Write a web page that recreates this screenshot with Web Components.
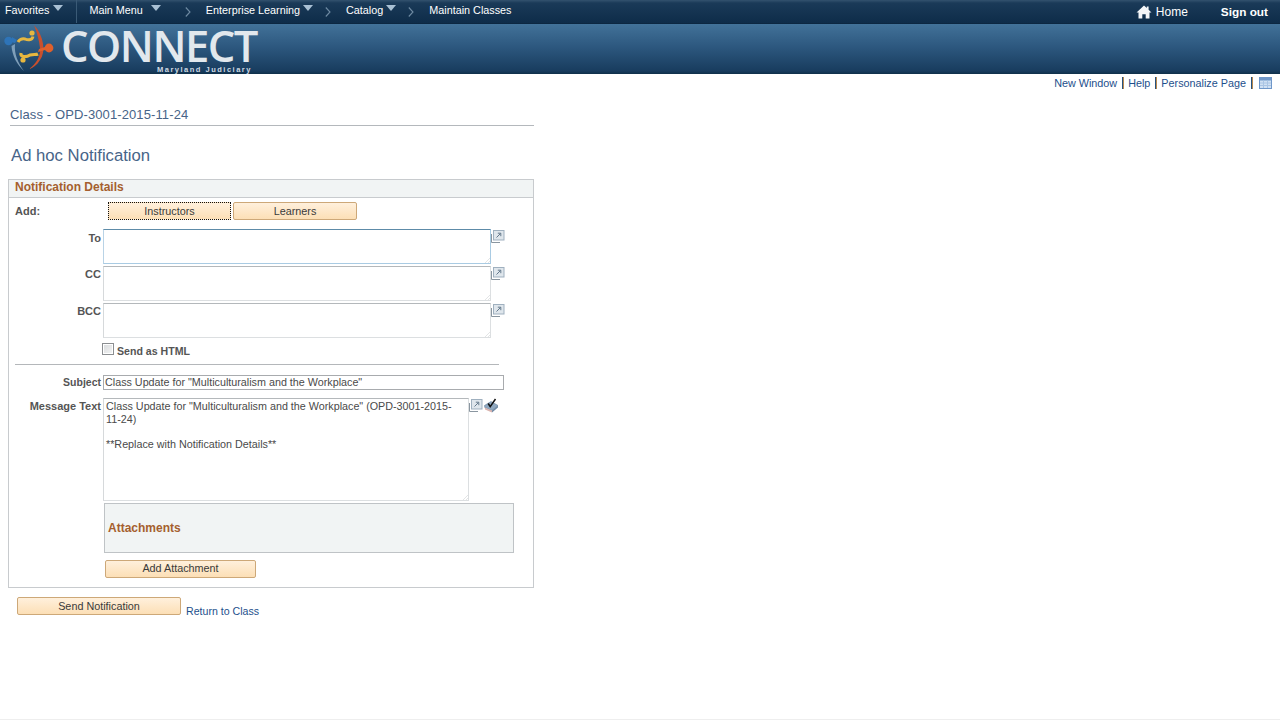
<!DOCTYPE html>
<html>
<head>
<meta charset="utf-8">
<title>Ad hoc Notification</title>
<style>
    html, body { margin: 0; padding: 0; background: #fff; }
    body { font-family: "Liberation Sans", Arial, sans-serif; font-size: 11px; color: #333; height: 720px; overflow: hidden; position: relative; }
</style>
</head>
<body>
<app-header>
    <app-navitem arrow>Favorites</app-navitem>
    <app-navsep></app-navsep>
    <app-navitem arrow gap="8">Main Menu</app-navitem>
    <app-chevron></app-chevron>
    <app-navitem arrow gap="3">Enterprise Learning</app-navitem>
    <app-chevron></app-chevron>
    <app-navitem arrow gap="3">Catalog</app-navitem>
    <app-chevron></app-chevron>
    <app-navitem>Maintain Classes</app-navitem>
</app-header>
<app-toolbar></app-toolbar>
<app-title></app-title>
<app-panel heading="Notification Details">
    <app-addrow>
        <app-btn width="123" focused>Instructors</app-btn>
        <app-btn width="124">Learners</app-btn>
    </app-addrow>
    <app-field label="To" gap="9"><app-box height="35" width="388" active></app-box><app-expand></app-expand></app-field>
    <app-field label="CC" gap="2"><app-box height="35" width="388"></app-box><app-expand></app-expand></app-field>
    <app-field label="BCC" gap="2"><app-box height="35" width="388"></app-box><app-expand></app-expand></app-field>
    <app-check>Send as HTML</app-check>
    <app-rule></app-rule>
    <app-field label="Subject" gap="10"><app-box height="15" width="401" single>Class Update for "Multiculturalism and the Workplace"</app-box></app-field>
    <app-field label="Message Text" gap="8"><app-box height="103" width="366">Class Update for "Multiculturalism and the Workplace" (OPD-3001-2015-11-24)

**Replace with Notification Details**</app-box><app-expand></app-expand><app-spell></app-spell></app-field>
    <app-attachments></app-attachments>
</app-panel>
<app-footer>
    <app-btn width="164">Send Notification</app-btn>
    <a slot="link">Return to Class</a>
</app-footer>
<app-bottomline></app-bottomline>

<script>
const FONT = '"Liberation Sans", Arial, sans-serif';

function shadow(el, html) {
    const template = document.createElement('template');
    template.innerHTML = html;
    el.attachShadow({ mode: 'open' }).appendChild(template.content.cloneNode(true));
}

class AppHeader extends HTMLElement {
    constructor() {
        super();
        shadow(this, `
            <style>
                :host { display: block; font-family: ${FONT}; }
                .nav {
                    height: 24px; box-sizing: border-box; display: flex; align-items: flex-start;
                    padding-left: 5px; color: #fff; font-size: 10.8px;
                    background: linear-gradient(#33526e 0, #1a3a58 3px, #0e2c49 100%);
                    border-bottom: 1px solid #0c2741;
                }
                .right { margin-left: auto; display: flex; align-items: center; height: 23px; font-size: 12px; padding-right: 12px; }
                .home { display: flex; align-items: center; gap: 4px; margin-right: 33px; }
                .home svg { margin-left: -1px; }
                .signout { font-weight: bold; font-size: 11.8px; }
                .banner {
                    height: 50px; box-sizing: border-box; position: relative;
                    display: flex; align-items: flex-start;
                    background: linear-gradient(#427299 0, #2d587f 45%, #183c5e 94%, #0f3049 100%);
                }
                .logo { flex: none; display: block; margin-top: -2px; }
                .brand { margin-left: 4px; position: relative; width: 210px; }
                .name { display: block; font-family: "Open Sans", sans-serif; font-size: 43.5px; font-weight: 600; line-height: 36px; margin-top: 4px; margin-left: 1px; color: #e2e8ed; letter-spacing: -1.5px; white-space: nowrap; }
                .sub { position: absolute; left: 97px; top: 41px; font-size: 7.5px; font-weight: bold; letter-spacing: 1.5px; color: #cfd9e2; white-space: nowrap; line-height: 9px; }
            </style>
            <div class="nav">
                <slot></slot>
                <div class="right">
                    <div class="home">
                        <svg width="16" height="14" viewBox="0 0 16 14"><path d="M8 0.5 0.5 7.5 2.5 7.5 2.5 13.5 6.3 13.5 6.3 9.2 9.7 9.2 9.7 13.5 13.5 13.5 13.5 7.5 15.5 7.5 12.6 4.8 12.6 1.5 10.8 1.5 10.8 3.1Z" fill="#f4f6f8"/></svg>
                        <span>Home</span>
                    </div>
                    <span class="signout">Sign out</span>
                </div>
            </div>
            <div class="banner">
                <svg class="logo" width="56" height="52" viewBox="0 0 56 52">
                    <path d="M34 3 C44 14 46 30 40 38 C37 43 33 46 29 47 C36 42 41 34 40 26 C39 18 37 10 34 3Z" fill="#c8502e"/>
                    <path d="M15 22 C14 32 18 41 24 49 C17 43 12 33 11.5 24Z" fill="#7f9fb9"/>
                    <circle cx="8.5" cy="19" r="4.2" fill="#2e74b8"/>
                    <path d="M12 15 L17 18 L15 21 L11 20Z" fill="#2e74b8"/>
                    <circle cx="49" cy="26" r="4.4" fill="#e0602c"/>
                    <path d="M39 27 L45 25 L45 28 L38 30Z" fill="#e0602c"/>
                    <circle cx="32" cy="11" r="2.6" fill="#e7b73f"/>
                    <path d="M33 14.5 C32 19 27 18 25 17 C22 16 19 18 18 20" stroke="#e7b73f" stroke-width="3" fill="none"/>
                    <circle cx="23" cy="38" r="2.6" fill="#e7b73f"/>
                    <path d="M21 31 C20 36 27 35 30 33 C33 32 36 33 38 32" stroke="#e7b73f" stroke-width="3.2" fill="none"/>
                </svg>
                <div class="brand"><span class="name">CONNECT</span><span class="sub">Maryland Judiciary</span></div>
            </div>
        `);
    }
}

class AppNavItem extends HTMLElement {
    constructor() {
        super();
        shadow(this, `
            <style>
                :host { display: flex; align-items: flex-start; height: 20px; line-height: 20px; white-space: nowrap; color: #fff; }
                svg { display: none; margin-top: 5px; }
                :host([arrow]) svg { display: block; }
            </style>
            <slot></slot>
            <svg width="10" height="6" viewBox="0 0 10 6"><path d="M0 0H10L5 6Z" fill="#a9c0d4"/></svg>
        `);
    }
    connectedCallback() {
        const gap = this.getAttribute('gap') || 4;
        this.shadowRoot.querySelector('svg').style.marginLeft = gap + 'px';
    }
}

class AppNavSep extends HTMLElement {
    constructor() {
        super();
        shadow(this, `<style>:host { display: block; width: 1px; height: 23px; background: #3a5a76; margin: 0 12px 0 13px; }</style>`);
    }
}

class AppChevron extends HTMLElement {
    constructor() {
        super();
        shadow(this, `
            <style>:host { display: block; margin: 7px 15px 0 12px; height: 10px; } svg { display: block; } :host(:nth-of-type(1)) { margin-left: 24px; }</style>
            <svg width="6" height="10" viewBox="0 0 6 10"><path d="M0.8 0.5 5 5 0.8 9.5" fill="none" stroke="#6f8ba3" stroke-width="1.1"/></svg>
        `);
    }
}

class AppToolbar extends HTMLElement {
    constructor() {
        super();
        shadow(this, `
            <style>
                :host { display: flex; justify-content: flex-end; align-items: center; height: 18px; padding: 0 8px 0 0; font: 10.8px ${FONT}; color: #1d4f8c; }
                span { white-space: nowrap; }
                i { display: block; width: 2px; height: 12px; margin: 0 4px 0 5px; background: linear-gradient(90deg, #27527e 50%, #b8894f 50%); }
                svg { display: block; margin: 0 0 1px 2px; }
            </style>
            <span>New Window</span><i></i><span>Help</span><i></i><span>Personalize Page</span><i></i>
            <svg width="13" height="12" viewBox="0 0 13 12">
                <rect x="0.5" y="0.5" width="12" height="11" fill="#cfe0f3" stroke="#6f97c9"/>
                <rect x="1" y="1" width="11" height="2.5" fill="#6f97c9"/>
                <path d="M1 6H12M1 8.5H12M4.5 3.5V11M8.5 3.5V11" stroke="#a9c4e4" stroke-width="1"/>
            </svg>
        `);
    }
}

class AppTitle extends HTMLElement {
    constructor() {
        super();
        shadow(this, `
            <style>
                :host { display: block; font-family: ${FONT}; color: #476488; padding: 14px 0 0 10px; width: 524px; }
                .crumb { font-size: 13px; line-height: 14px; padding: 2px 0 3px; border-bottom: 1px solid #b4b8bc; letter-spacing: 0.11px; white-space: nowrap; }
                h1 { font-size: 16.7px; font-weight: normal; line-height: 20px; margin: 20px 0 13px 1px; }
            </style>
            <div class="crumb">Class - OPD-3001-2015-11-24</div>
            <h1>Ad hoc Notification</h1>
        `);
    }
}

class AppPanel extends HTMLElement {
    constructor() {
        super();
        shadow(this, `
            <style>
                :host { display: block; box-sizing: border-box; width: 526px; height: 409px; margin-left: 8px; border: 1px solid #c8cbce; font-family: ${FONT}; }
                .head { height: 18px; box-sizing: border-box; background: #f1f4f4; border-bottom: 1px solid #c8cbce; padding-left: 6px; font-size: 12px; font-weight: bold; line-height: 14px; color: #a55f2e; }
            </style>
            <div class="head"></div>
            <slot></slot>
        `);
    }
    connectedCallback() {
        this.shadowRoot.querySelector('.head').textContent = this.getAttribute('heading');
    }
}

class AppAddRow extends HTMLElement {
    constructor() {
        super();
        shadow(this, `
            <style>
                :host { display: flex; align-items: flex-start; height: 18px; margin-top: 4px; }
                .lbl { width: 93px; padding-left: 6px; font-size: 11px; font-weight: bold; color: #555; line-height: 18px; }
                .btns { display: flex; gap: 2px; }
            </style>
            <div class="lbl">Add:</div>
            <div class="btns"><slot></slot></div>
        `);
    }
}

class AppBtn extends HTMLElement {
    constructor() {
        super();
        shadow(this, `
            <style>
                :host { display: block; box-sizing: border-box; height: 18px; border: 1px solid #cda878; border-radius: 2px; background: linear-gradient(#fff0dc, #fcdfb6); color: #3a3a3a; font: 10.8px/16px ${FONT}; text-align: center; white-space: nowrap; }
                :host([focused]) { border: 1px dotted #111; border-radius: 0; }
                :host([tight]) { line-height: 14px; }
            </style>
            <slot></slot>
        `);
    }
    connectedCallback() {
        this.style.width = this.getAttribute('width') + 'px';
    }
}

class AppField extends HTMLElement {
    constructor() {
        super();
        shadow(this, `
            <style>
                :host { display: flex; align-items: flex-start; }
                .lbl { width: 92px; flex: none; text-align: right; font-size: 11px; font-weight: bold; color: #555; line-height: 14px; padding-top: 1px; margin-right: 2px; white-space: nowrap; }
                :host([label="To"]) .lbl { padding-top: 2px; }
                :host([label="Subject"]) .lbl { padding-top: 0; font-size: 10.5px; }
            </style>
            <div class="lbl"></div>
            <slot></slot>
        `);
    }
    connectedCallback() {
        this.shadowRoot.querySelector('.lbl').textContent = this.getAttribute('label');
        this.style.marginTop = (this.getAttribute('gap') || 0) + 'px';
    }
}

class AppBox extends HTMLElement {
    constructor() {
        super();
        shadow(this, `
            <style>
                :host { display: block; flex: none; position: relative; box-sizing: border-box; background: #fff; border: 1px solid #dcdfe1; border-top-color: #b4b8bb; border-left-color: #d6d9db; font: 10.75px/12.5px ${FONT}; color: #4a4a4a; padding: 1px 2px; overflow: hidden; }
                :host([active]) { border-color: #a9cbe3; border-top-color: #5d8ba8; border-left-color: #b9d3e6; }
                :host([single]) { border: 1px solid #a8abae; padding: 0 1px; }
                .text { white-space: pre-wrap; }
                :host([single]) .text { white-space: nowrap; line-height: 13px; }
                .grip { position: absolute; right: 0; bottom: 0; }
                :host([single]) .grip { display: none; }
            </style>
            <div class="text"><slot></slot></div>
            <svg class="grip" width="5" height="5" viewBox="0 0 5 5"><path d="M0 5 5 0M3 5 5 3" stroke="#dcdee0" stroke-width="0.8"/></svg>
        `);
    }
    connectedCallback() {
        this.style.width = this.getAttribute('width') + 'px';
        this.style.height = this.getAttribute('height') + 'px';
    }
}

class AppExpand extends HTMLElement {
    constructor() {
        super();
        shadow(this, `
            <style>:host { display: block; flex: none; width: 14px; height: 14px; margin-top: 1px; } svg { display: block; }</style>
            <svg width="14" height="14" viewBox="0 0 14 14">
                <path d="M0.5 4V12.5H9" fill="none" stroke="#8a96a0"/>
                <rect x="2.5" y="0.5" width="10.5" height="9.5" fill="#dfe6ec" stroke="#9fb0bf"/>
                <path d="M5.5 7.5 9.5 3.5M6.8 3.2H9.8V6.2" fill="none" stroke="#64798c"/>
            </svg>
        `);
    }
}

class AppSpell extends HTMLElement {
    constructor() {
        super();
        shadow(this, `
            <style>:host { display: block; flex: none; width: 15px; height: 15px; margin-left: 1px; } svg { display: block; }</style>
            <svg width="15" height="15" viewBox="0 0 15 15">
                <path d="M0.5 7.5 7 3.5 14 7.5 8 12.5 0.8 9.5Z" fill="#8fa8c0" stroke="#64809b" stroke-width="0.6"/>
                <path d="M0.8 9.5 8 12.5 8 14.5 1 11.5Z" fill="#d9b3ae"/>
                <path d="M8 12.5 14 7.5 14 9.5 8 14.5Z" fill="#6f8aa5"/>
                <path d="M4.2 5.5 6.2 8.6 11.5 1" fill="none" stroke="#111" stroke-width="1.5"/>
            </svg>
        `);
    }
}

class AppCheck extends HTMLElement {
    constructor() {
        super();
        shadow(this, `
            <style>
                :host { display: flex; align-items: flex-start; margin: 5px 0 0 93px; font-size: 10.6px; font-weight: bold; color: #555; height: 15px; }
                .cb { width: 12px; height: 12px; box-sizing: border-box; border: 1px solid #8b8e91; background: linear-gradient(135deg, #d8dadc, #f4f5f5); box-shadow: inset 0 0 0 1px #fff; margin-right: 3px; }
                .t { line-height: 14px; margin-top: 1px; }
            </style>
            <div class="cb"></div><div class="t"><slot></slot></div>
        `);
    }
}

class AppRule extends HTMLElement {
    constructor() {
        super();
        shadow(this, `<style>:host { display: block; height: 1px; background: #b4b7ba; width: 484px; margin: 6px 0 0 6px; }</style>`);
    }
}

class AppAttachments extends HTMLElement {
    constructor() {
        super();
        shadow(this, `
            <style>
                :host { display: block; margin: 2px 0 0 95px; }
                .box { width: 410px; height: 50px; box-sizing: border-box; background: #f1f4f4; border: 1px solid #bfc3c6; display: flex; align-items: center; padding-left: 3px; color: #a55f2e; font-size: 12px; font-weight: bold; }
                .btn { margin: 7px 0 0 1px; }
            </style>
            <div class="box">Attachments</div>
            <div class="btn"><app-btn width="151" tight>Add Attachment</app-btn></div>
        `);
    }
}

class AppFooter extends HTMLElement {
    constructor() {
        super();
        shadow(this, `
            <style>
                :host { display: flex; align-items: flex-start; margin: 9px 0 0 17px; font: 10.6px ${FONT}; }
                ::slotted(a) { color: #1d4f8c; margin: 8px 0 0 5px; line-height: 13px; }
            </style>
            <slot></slot>
            <slot name="link"></slot>
        `);
    }
}

class AppBottomLine extends HTMLElement {
    constructor() {
        super();
        shadow(this, `<style>:host { display: block; position: absolute; left: 0; right: 0; bottom: 0; height: 1px; background: #eeeeee; }</style>`);
    }
}

customElements.define('app-header', AppHeader);
customElements.define('app-navitem', AppNavItem);
customElements.define('app-navsep', AppNavSep);
customElements.define('app-chevron', AppChevron);
customElements.define('app-toolbar', AppToolbar);
customElements.define('app-title', AppTitle);
customElements.define('app-panel', AppPanel);
customElements.define('app-addrow', AppAddRow);
customElements.define('app-btn', AppBtn);
customElements.define('app-field', AppField);
customElements.define('app-box', AppBox);
customElements.define('app-expand', AppExpand);
customElements.define('app-spell', AppSpell);
customElements.define('app-check', AppCheck);
customElements.define('app-rule', AppRule);
customElements.define('app-attachments', AppAttachments);
customElements.define('app-footer', AppFooter);
customElements.define('app-bottomline', AppBottomLine);
</script>
</body>
</html>
